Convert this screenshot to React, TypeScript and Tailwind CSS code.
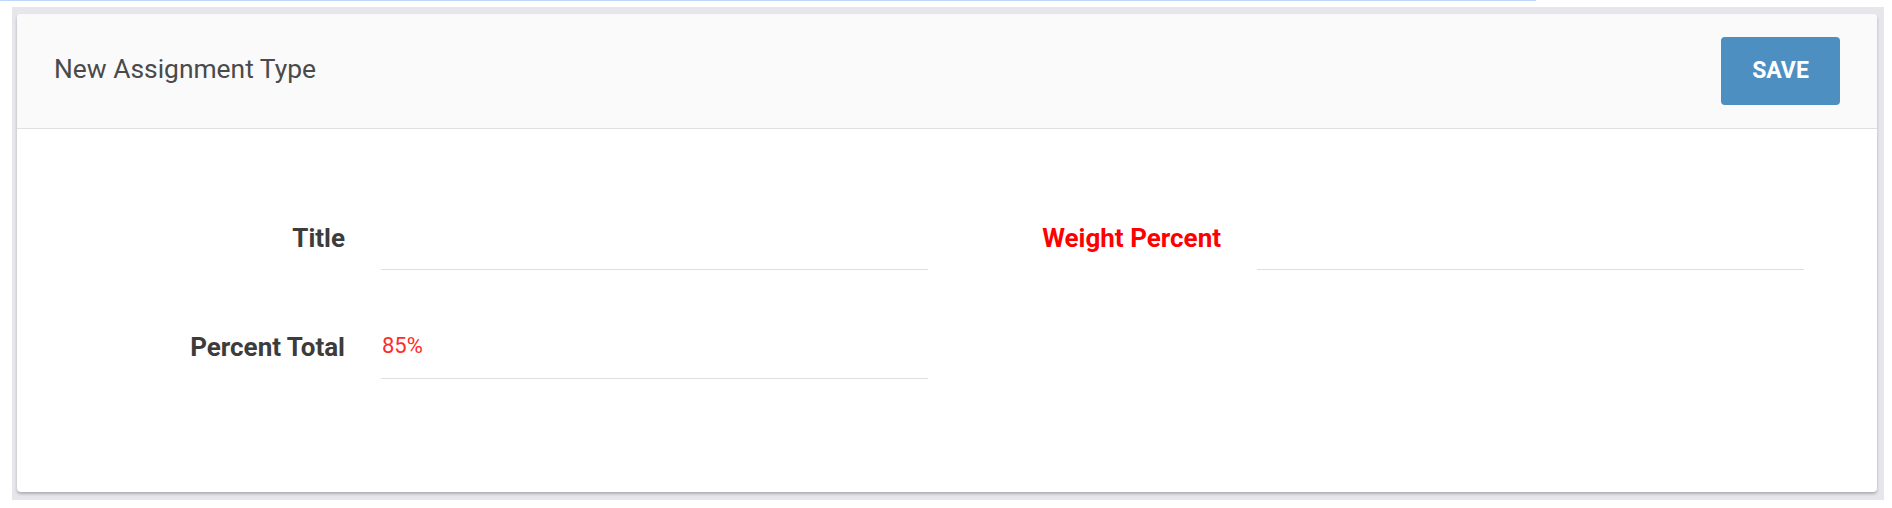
import React from 'react';

const Field: React.FC<{ label: string; value?: string; labelClass?: string }> = ({ label, value, labelClass }) => (
  <div className="flex items-center">
    <label className={`w-[276px] shrink-0 pt-[3px] text-right font-bold text-[26px] ${labelClass ?? 'text-[#3c3c3c]'}`}>
      {label}
    </label>
    <div className="ml-[36px] w-[547px] h-[67px] flex items-center border-b border-[#dedede]">
      {value && <span className="pl-[1px] text-[22px] text-[#ff2a2a]">{value}</span>}
    </div>
  </div>
);

const App: React.FC = () => {
  return (
    <div className="w-[1892px] h-[508px] bg-white font-['Roboto',sans-serif]">
      <div className="w-[1536px] h-px bg-[#bcd7fa]" />
      <div className="mt-[6px] ml-[12px] w-[1872px] bg-[#e6e6ec] pt-[7px] pb-[8px] pl-[5px] pr-[7px]">
        <div className="bg-white rounded-[4px] shadow-[0_2px_3px_rgba(0,0,0,0.25)] overflow-hidden">
          <div className="h-[115px] bg-[#fafafa] border-b border-[#e0e0e0] flex items-center justify-between pl-[37px] pr-[37px]">
            <h2 className="text-[26.4px] text-[#4a4a4a] pb-[2px]">New Assignment Type</h2>
            <button className="w-[119px] h-[68px] rounded-[4px] bg-[#4e8fc2] text-white font-bold text-[23px]">
              SAVE
            </button>
          </div>
          <div className="pt-[74px] pb-[113px] pl-[52px]">
            <div className="grid grid-cols-[876px_876px] gap-y-[42px]">
              <Field label="Title" />
              <Field label="Weight Percent" labelClass="text-[#ff0000]" />
              <Field label="Percent Total" value="85%" />
            </div>
          </div>
        </div>
      </div>
    </div>
  );
};

export default App;
